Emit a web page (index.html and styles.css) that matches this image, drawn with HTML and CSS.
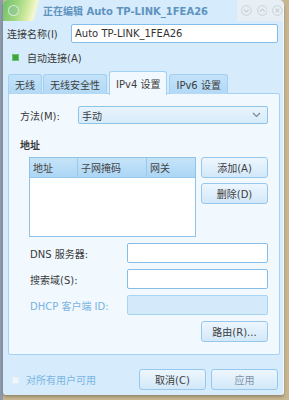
FILE: index.html
```html
<!DOCTYPE html>
<html lang="zh">
<head>
<meta charset="utf-8">
<link rel="stylesheet" href="styles.css">
</head>
<body>
<div class="window">
  <div class="titlebar">
    <div class="logo"><span class="logo-dot"></span></div>
    <span class="title">正在编辑 Auto TP-LINK_1FEA26</span>
    <div class="controls">
      <svg width="11" height="11" viewBox="0 0 11 11"><circle cx="5.5" cy="5.5" r="5" fill="none" stroke="#c9d0d6"/><polyline points="3,4.5 5.5,7 8,4.5" fill="none" stroke="#c9d0d6" stroke-width="1.2"/></svg>
      <svg width="11" height="11" viewBox="0 0 11 11"><circle cx="5.5" cy="5.5" r="5" fill="none" stroke="#c9d0d6"/><polyline points="3,6.5 5.5,4 8,6.5" fill="none" stroke="#c9d0d6" stroke-width="1.2"/></svg>
      <svg width="11" height="11" viewBox="0 0 11 11"><circle cx="5.5" cy="5.5" r="5" fill="none" stroke="#c9d0d6"/><path d="M3.7 3.7L7.3 7.3M7.3 3.7L3.7 7.3" stroke="#c9d0d6" stroke-width="1.2"/></svg>
    </div>
  </div>

  <div class="name-row">
    <span class="name-label">连接名称(I)</span>
    <div class="field">Auto TP-LINK_1FEA26</div>
  </div>

  <div class="auto-row">
    <span class="green-box"></span>
    <span>自动连接(A)</span>
  </div>

  <div class="tabs">
    <div class="tab">无线</div>
    <div class="tab">无线安全性</div>
    <div class="tab active">IPv4 设置</div>
    <div class="tab">IPv6 设置</div>
  </div>

  <div class="panel">
    <div class="method-row">
      <span class="method-label">方法(M):</span>
      <div class="combo">
        <span>手动</span>
        <svg width="9" height="6" viewBox="0 0 9 6"><polyline points="1,1 4.5,4.5 8,1" fill="none" stroke="#7d8790" stroke-width="1.2"/></svg>
      </div>
    </div>

    <div class="section-title">地址</div>

    <div class="address-block">
      <div class="table">
        <div class="thead">
          <div class="th c1">地址</div>
          <div class="th c2">子网掩码</div>
          <div class="th c3">网关</div>
        </div>
      </div>
      <div class="side-buttons">
        <div class="btn">添加(A)</div>
        <div class="btn">删除(D)</div>
      </div>
    </div>

    <div class="form-grid">
      <span class="f-label">DNS 服务器:</span>
      <div class="field"></div>
      <span class="f-label">搜索域(S):</span>
      <div class="field"></div>
      <span class="f-label disabled">DHCP 客户端 ID:</span>
      <div class="field disabled"></div>
    </div>

    <div class="route-row">
      <div class="btn">路由(R)...</div>
    </div>
  </div>

  <div class="footer">
    <span class="small-check"></span>
    <span class="all-users">对所有用户可用</span>
    <div class="footer-buttons">
      <div class="btn">取消(C)</div>
      <div class="btn muted">应用</div>
    </div>
  </div>
</div>
</body>
</html>
```

FILE: styles.css
```css
html, body {
  margin: 0;
  padding: 0;
}
body {
  width: 289px;
  height: 400px;
  overflow: hidden;
  background: linear-gradient(90deg, #8e9bab 0, #8e9bab 3px, #c7b68f 3px);
  font-family: "DejaVu Sans", "Noto Sans CJK SC", sans-serif;
  font-size: 10px;
  color: #3a3a3a;
}
.window {
  margin-left: 3px;
  width: 281px;
  height: 395px;
  box-sizing: border-box;
  background: #d6ebfb;
  border-right: 1px solid #f2f8fd;
  border-radius: 5px 5px 3px 3px;
  box-shadow: 0 2px 3px rgba(0,0,0,0.25);
  display: flex;
  flex-direction: column;
}
.titlebar {
  height: 21px;
  display: flex;
  align-items: center;
  border-radius: 5px 5px 0 0;
  overflow: hidden;
}
.logo {
  width: 40px;
  height: 21px;
  flex: none;
  background: linear-gradient(105deg, #6fc06b 0%, #9fd680 35%, #d8eda6 62%, #f4f7cf 75%, rgba(214,235,251,0) 82%);
  display: flex;
  align-items: center;
  padding-left: 5px;
  box-sizing: border-box;
}
.logo-dot {
  width: 9px;
  height: 9px;
  border-radius: 50%;
  border: 1px solid rgba(255,255,255,0.6);
  background: rgba(140,200,150,0.6);
}
.title {
  font-weight: bold;
  color: #5e93bf;
  white-space: nowrap;
}
.controls {
  margin-left: auto;
  height: 21px;
  width: 46px;
  background: #e7eff5;
  display: flex;
  align-items: center;
  gap: 5px;
  padding-left: 4px;
  box-sizing: border-box;
}
.name-row {
  margin-top: 3px;
  display: flex;
  align-items: center;
  padding: 0 5px 0 4px;
}
.name-label {
  width: 64px;
  flex: none;
}
.field {
  height: 19px;
  box-sizing: border-box;
  background: #fff;
  border: 1px solid #86bde8;
  border-radius: 2px;
  padding-left: 3px;
  display: flex;
  align-items: center;
  flex: 1;
  color: #333;
}
.auto-row {
  margin-top: 7px;
  height: 14px;
  display: flex;
  align-items: center;
  padding-left: 9px;
  gap: 8px;
}
.green-box {
  width: 5px;
  height: 5px;
  background: #3da63d;
  border: 1px solid #6cc36c;
}
.tabs {
  margin-top: 7px;
  height: 23px;
  display: flex;
  align-items: flex-end;
  padding-left: 5px;
  gap: 1px;
  position: relative;
  z-index: 1;
}
.tab {
  height: 20px;
  box-sizing: border-box;
  padding: 0 6px;
  display: flex;
  align-items: center;
  background: linear-gradient(#c3e2f9, #b2d9f6);
  border: 1px solid #a3cff1;
  border-bottom: none;
  border-radius: 3px 3px 0 0;
  color: #3d3d3d;
}
.tab.active {
  height: 24px;
  margin: 0 1px -1px;
  background: #f1f8fe;
  padding: 0 6px;
}
.panel {
  margin: -1px 3px 0 5px;
  height: 262px;
  box-sizing: border-box;
  border: 1px solid #a6d1f2;
  border-radius: 2px;
  background: #f1f8fe;
  padding: 12px 11px 0 11px;
}
.method-row {
  display: flex;
  align-items: center;
}
.method-label {
  width: 58px;
  flex: none;
}
.combo {
  flex: 1;
  height: 18px;
  box-sizing: border-box;
  border: 1px solid #8ec3ea;
  border-radius: 2px;
  background: linear-gradient(#e9f4fd, #d6ebfa);
  display: flex;
  align-items: center;
  justify-content: space-between;
  padding: 0 6px 0 3px;
}
.section-title {
  margin-top: 16px;
  font-weight: bold;
  height: 12px;
  line-height: 12px;
}
.address-block {
  margin-top: 5px;
  padding-left: 9px;
  display: flex;
  gap: 5px;
}
.table {
  width: 168px;
  height: 80px;
  box-sizing: border-box;
  border: 1px solid #8fc3ea;
  background: #fff;
}
.thead {
  height: 19px;
  display: flex;
  background: linear-gradient(#c6e4f9, #acd6f5);
  border-bottom: 1px solid #97c9ee;
}
.th {
  display: flex;
  align-items: center;
  padding-left: 3px;
  box-sizing: border-box;
  color: #444;
}
.c1 { width: 48px; border-right: 1px solid #97c9ee; }
.c2 { width: 69px; border-right: 1px solid #97c9ee; }
.c3 { flex: 1; }
.side-buttons {
  display: flex;
  flex-direction: column;
  gap: 5px;
}
.btn {
  width: 67px;
  height: 21px;
  box-sizing: border-box;
  border: 1px solid #96c8ee;
  border-radius: 3px;
  background: linear-gradient(#edf6fe, #d2e8f9);
  display: flex;
  align-items: center;
  justify-content: center;
  color: #3d3d3d;
}
.btn.muted {
  color: #7f93a5;
}
.form-grid {
  margin-top: 6px;
  padding-left: 10px;
  display: grid;
  grid-template-columns: 97px 1fr;
  grid-auto-rows: 20px;
  row-gap: 6px;
  align-items: center;
}
.form-grid .field {
  height: 20px;
}
.f-label.disabled {
  color: #78b3e1;
}
.field.disabled {
  background: #d4eafb;
  border-color: #a9d3f3;
}
.route-row {
  margin-top: 6px;
  display: flex;
  justify-content: flex-end;
}
.footer {
  padding: 14px 5px 0 9px;
  display: flex;
  align-items: center;
}
.small-check {
  width: 5px;
  height: 5px;
  border: 1px solid #e3eef7;
  background: #f0f6fb;
  margin-top: 2px;
}
.all-users {
  margin-left: 7px;
  color: #7ab5e3;
}
.footer-buttons {
  margin-left: auto;
  display: flex;
  gap: 5px;
}
```
